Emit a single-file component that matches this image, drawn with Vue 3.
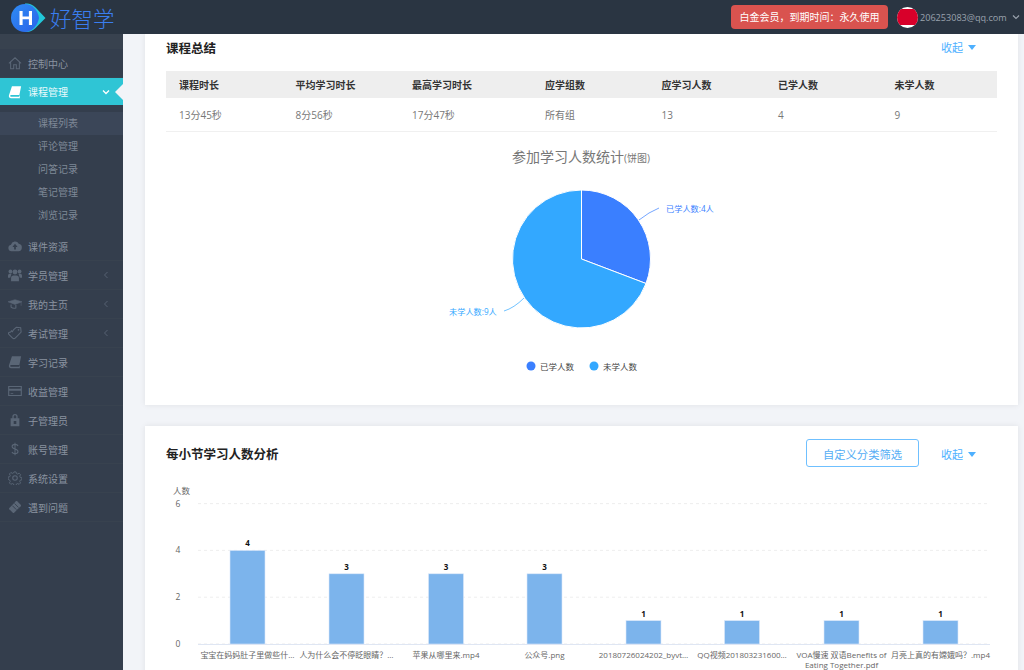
<template>
  <div class="page">
    <header class="topbar">
      <div class="logo">
        <svg class="logo-mark" width="36" height="30" viewBox="0 0 36 30">
          <defs>
            <linearGradient id="logoBlue" x1="0" y1="0" x2="1" y2="1">
              <stop offset="0" stop-color="#2f8df5" />
              <stop offset="1" stop-color="#2a62e8" />
            </linearGradient>
          </defs>
          <path d="M15 0.500C21 0.500 24 2.500 27 6L35.500 15 27 23.500C24 27 21 29 15 29Z" fill="#22c7d8" />
          <path d="M15 1C22 1 28 7 29 15 28 22 22 29 15 29A14 14 0 0 1 15 1Z" fill="url(#logoBlue)" />
          <path d="M9.500 8h3.100v5.500h6.300V8h3.100v14h-3.100v-5.700h-6.300V22H9.500z" fill="#fff" />
        </svg>
        <span class="logo-text">好智学</span>
      </div>
      <div class="user">
        <span class="badge">白金会员，到期时间：永久使用</span>
        <span class="avatar"><i></i></span>
        <span class="email">206253083@qq.com</span>
        <svg width="8" height="6" viewBox="0 0 8 6"><path d="M1 1.500l3 3 3-3" fill="none" stroke="#9aa3ae" stroke-width="1.200" /></svg>
      </div>
    </header>

    <div class="body">
      <aside class="sidebar">
        <div class="side-top"></div>
        <template v-for="item in menu" :key="item.label">
          <div class="menu-item" :class="{ active: item.active }">
            <svg class="menu-icon" width="14" height="14" viewBox="0 0 16 16" v-html="icons[item.icon]"></svg>
            <span class="menu-label">{{ item.label }}</span>
            <svg v-if="item.active" class="chev" width="8" height="8" viewBox="0 0 8 8"><path d="M1 2.500l3 3 3-3" fill="none" stroke="#fff" stroke-width="1.300" /></svg>
            <svg v-if="item.more" class="chev" width="8" height="8" viewBox="0 0 8 8"><path d="M5.500 1l-3 3 3 3" fill="none" stroke="#566172" stroke-width="1" /></svg>
            <span v-if="item.active" class="notch"></span>
          </div>
          <ul v-if="item.active" class="submenu">
            <li v-for="(sub, i) in submenu" :key="sub" :class="{ current: i === 0 }">{{ sub }}</li>
          </ul>
        </template>
      </aside>

      <main class="main">
        <section class="card first">
          <div class="card-head">
            <h2>课程总结</h2>
            <a class="toggle">收起<i class="caret"></i></a>
          </div>
          <div class="table">
            <div class="row head">
              <span v-for="h in tableHead" :key="h">{{ h }}</span>
            </div>
            <div class="row">
              <span v-for="c in tableRow" :key="c">{{ c }}</span>
            </div>
          </div>
          <svg class="pie" width="831" height="273" viewBox="166 132 831 273">
            <text x="512" y="162" class="pie-title">参加学习人数统计<tspan class="pie-sub">(饼图)</tspan></text>
            <path d="M581.500 259V190A69 69 0 0 1 646 283.500Z" fill="#3a7fff" stroke="#fff" />
            <path d="M581.500 259L646 283.500A69 69 0 1 1 581.500 190Z" fill="#33a8ff" stroke="#fff" />
            <path d="M639 220Q649 212 659 208" fill="none" stroke="#3a7fff" stroke-width=".7" />
            <path d="M524 298Q514 308 504 311" fill="none" stroke="#33a8ff" stroke-width=".7" />
            <text x="666" y="212" class="pie-label" fill="#3a7fff">已学人数:4人</text>
            <text x="449" y="315" class="pie-label" fill="#33a8ff">未学人数:9人</text>
            <circle cx="531" cy="366" r="4.500" fill="#3a7fff" />
            <text x="540" y="369.500" class="legend">已学人数</text>
            <circle cx="594" cy="366" r="4.500" fill="#33a8ff" />
            <text x="603" y="369.500" class="legend">未学人数</text>
          </svg>
        </section>

        <section class="card second">
          <div class="card-head tall">
            <h2>每小节学习人数分析</h2>
            <div class="head-actions">
              <button class="filter">自定义分类筛选</button>
              <a class="toggle low">收起<i class="caret"></i></a>
            </div>
          </div>
          <svg class="bars" width="831" height="190" viewBox="166 480 831 190">
            <text x="173" y="494" class="axis">人数</text>
            <g v-for="t in ticks" :key="t">
              <line x1="198" x2="990" :y1="yOf(t)" :y2="yOf(t)" class="grid" />
              <text x="178" :y="yOf(t) + 3" class="axis" text-anchor="middle">{{ t }}</text>
            </g>
            <line x1="198" x2="990" y1="644.500" y2="644.500" stroke="#dfe6f3" />
            <g v-for="b in bars" :key="b.x">
              <rect :x="b.x" :y="yOf(b.value)" width="35" :height="644 - yOf(b.value)" fill="#7cb4ec" stroke="#dbe8fa" stroke-width=".6" />
              <text :x="b.x + 17.500" :y="yOf(b.value) - 4" class="value" text-anchor="middle">{{ b.value }}</text>
              <text v-for="(line, i) in b.label" :key="line" :x="b.x + 17.500" :y="657.500 + i * 10" class="xlabel" text-anchor="middle">{{ line }}</text>
            </g>
          </svg>
        </section>
      </main>
    </div>
  </div>
</template>

<script setup>
const icons = {
  home: '<path d="M1 8.500L8 2l7 6.500M3 7v7.500h3.500V10h3v4.500H13V7" fill="none" stroke="currentColor" stroke-width="1.200"/>',
  book: '<path d="M4.500 1.500H15l-2 10H4c-1 0-1.500.5-1.500 1s.5 1 1.500 1h8.500l1-2v3.500H3.500C1.800 15 1 14 1 12.800c0-.5.100-1 .2-1.300z" fill="currentColor"/>',
  cloud: '<path d="M4 14a3.800 3.800 0 0 1-.6-7.500A4.800 4.800 0 0 1 12.300 5.500 4.300 4.300 0 0 1 12 14zM8 5.500L5 9h2v3h2V9h2z" fill="currentColor" fill-rule="evenodd"/>',
  users: '<circle cx="8" cy="4.500" r="2.800" fill="currentColor"/><circle cx="2.800" cy="4" r="2.200" fill="currentColor"/><circle cx="13.200" cy="4" r="2.200" fill="currentColor"/><path d="M3.500 15v-3.500a3 3 0 0 1 3-3h3a3 3 0 0 1 3 3V15zM0 11V8.500a2 2 0 0 1 2-2h2l-1.500 4.500zM16 11V8.500a2 2 0 0 0-2-2h-2l1.500 4.500z" fill="currentColor"/>',
  cap: '<path d="M0 5.500L8 3l8 2.500-8 3zM15 6v4" fill="currentColor" stroke="currentColor" stroke-width=".6"/><path d="M3.500 8.500v3c1.500 1.300 3.500 1.500 5.500 1V9" fill="none" stroke="currentColor" stroke-width="1.200"/>',
  tag: '<path d="M9.500 1.500l5 .5.500 5-6.500 6.500c-1 1-2.500 1-3.500 0l-4-4c-.5-.5-.5-1.500 0-2L3 7l1-1.500 1 1L6.500 4z" fill="none" stroke="currentColor" stroke-width="1.200"/><circle cx="12" cy="4.300" r="1" fill="currentColor"/>',
  card: '<path d="M.800 2.800h14.400v10.400H.800z" fill="none" stroke="currentColor" stroke-width="1.300"/><path d="M1 5.300h14v2.400H1zM3 10.500h3v1H3z" fill="currentColor"/>',
  lock: '<path d="M5 6V4a3 3 0 0 1 6 0v2h2v9H3V6zM6.500 6h3V4a1.500 1.500 0 0 0-3 0zM6.500 9v3.500h3V9z" fill="currentColor" fill-rule="evenodd"/>',
  dollar: '<path d="M11.500 4.500C11 3.200 9.700 2.700 8 2.700 6 2.700 4.700 3.700 4.700 5.200 4.700 7 6.300 7.500 8 8s3.400 1.100 3.400 2.900c0 1.500-1.400 2.500-3.400 2.500-1.700 0-3-.7-3.500-1.900M8 .800v14.400" fill="none" stroke="currentColor" stroke-width="1.200"/>',
  gear: '<circle cx="8" cy="8" r="2.600" fill="none" stroke="currentColor" stroke-width="1.200"/><path d="M6.800 1h2.400l.4 1.900 1.500.6 1.600-1 1.700 1.700-1 1.600.6 1.500 1.900.4v2.400l-1.900.4-.6 1.500 1 1.600-1.700 1.700-1.600-1-1.500.6-.4 1.900H6.800l-.4-1.900-1.500-.6-1.600 1-1.700-1.700 1-1.600-.6-1.500L.100 9.300V6.900l1.900-.4.600-1.500-1-1.600 1.700-1.700 1.600 1 1.500-.6z" fill="none" stroke="currentColor" stroke-width="1.100"/>',
  ticket: '<path d="M10.500 1.500l4 4c.5.500.5 1 0 1.500l-7.500 7.500c-.5.500-1 .5-1.500 0l-4-4c-.5-.5-.5-1 0-1.500L9 1.500c.5-.5 1-.5 1.500 0z" fill="currentColor"/><path d="M5 6.500l4.500 4.500M7.500 4l4.500 4.500" fill="none" stroke="#343e4d" stroke-width="1"/>'
}

const menu = [
  { label: '控制中心', icon: 'home' },
  { label: '课程管理', icon: 'book', active: true },
  { label: '课件资源', icon: 'cloud' },
  { label: '学员管理', icon: 'users', more: true },
  { label: '我的主页', icon: 'cap', more: true },
  { label: '考试管理', icon: 'tag', more: true },
  { label: '学习记录', icon: 'book' },
  { label: '收益管理', icon: 'card' },
  { label: '子管理员', icon: 'lock' },
  { label: '账号管理', icon: 'dollar' },
  { label: '系统设置', icon: 'gear' },
  { label: '遇到问题', icon: 'ticket' }
]

const submenu = ['课程列表', '评论管理', '问答记录', '笔记管理', '浏览记录']

const tableHead = ['课程时长', '平均学习时长', '最高学习时长', '应学组数', '应学习人数', '已学人数', '未学人数']
const tableRow = ['13分45秒', '8分56秒', '17分47秒', '所有组', '13', '4', '9']

const ticks = [0, 2, 4, 6]

const bars = [
  { x: 230, value: 4, label: ['宝宝在妈妈肚子里做些什…'] },
  { x: 329, value: 3, label: ['人为什么会不停眨眼睛？…'] },
  { x: 428.500, value: 3, label: ['苹果从哪里来.mp4'] },
  { x: 527, value: 3, label: ['公众号.png'] },
  { x: 626, value: 1, label: ['20180726024202_byvt…'] },
  { x: 724.500, value: 1, label: ['QQ视频201803231600…'] },
  { x: 824, value: 1, label: ['VOA慢速 双语Benefits of', 'Eating Together.pdf'] },
  { x: 923, value: 1, label: ['月亮上真的有嫦娥吗？.mp4'] }
]

function yOf(v) {
  return 644 - v * 23.400
}
</script>

<style>
html, body {
  margin: 0;
  background: #f2f4f8;
}
</style>

<style scoped>
.page {
  width: 1024px;
  height: 670px;
  overflow: hidden;
  display: flex;
  flex-direction: column;
  font-family: "Open Sans", "Noto Sans CJK SC", sans-serif;
  font-size: 10px;
}

.topbar {
  height: 34px;
  flex: none;
  background: #2a3542;
  display: flex;
  align-items: center;
  justify-content: space-between;
  padding: 0 4px 0 10px;
}

.logo {
  display: flex;
  align-items: center;
  gap: 3px;
}

.logo-mark {
  margin-top: 2px;
}

.logo-text {
  color: #3a7ef0;
  font-size: 21.500px;
  font-weight: 300;
  margin-left: 1px;
}

.user {
  display: flex;
  align-items: center;
}

.badge {
  width: 157px;
  height: 24px;
  line-height: 24px;
  text-align: center;
  color: #fff;
  background: #d9534f;
  border-radius: 4px;
  font-size: 10px;
  margin-right: 9px;
}

.avatar {
  width: 21px;
  height: 21px;
  border-radius: 50%;
  background: #fff;
  display: flex;
  align-items: center;
  justify-content: center;
  overflow: hidden;
  margin-right: 2px;
}

.avatar i {
  width: 21px;
  height: 16px;
  background: #d8002a;
}

.email {
  color: #9aa3ae;
  font-size: 9.100px;
  width: 92px;
  white-space: nowrap;
}

.body {
  flex: 1;
  display: flex;
  min-height: 0;
}

.sidebar {
  width: 123px;
  flex: none;
  background: #343e4d;
  color: #8a93a0;
}

.side-top {
  height: 15px;
  background: #38424f;
}

.menu-item {
  position: relative;
  height: 29px;
  display: flex;
  align-items: center;
  padding-left: 8px;
  color: #5a6676;
  border-bottom: 1px solid #38424f;
  box-sizing: border-box;
}

.menu-item.active {
  height: 27px;
  background: #2fc5d5;
  color: #fff;
  border-bottom: 0;
}

.menu-icon {
  width: 14px;
  height: 14px;
  flex: none;
}

.menu-label {
  margin-left: 6px;
  color: #8a93a0;
}

.active .menu-label {
  color: #eafafc;
}

.chev {
  position: absolute;
  left: 102px;
  top: 50%;
  margin-top: -4px;
}

.notch {
  position: absolute;
  right: 0;
  top: 6px;
  border: 8px solid transparent;
  border-left: 0;
  border-right-color: #f2f4f8;
}

.submenu {
  list-style: none;
  margin: 0;
  padding: 7px 0 5px;
}

.submenu li {
  height: 23px;
  line-height: 23px;
  padding-left: 38px;
  color: #7f8997;
}

.submenu li.current {
  background: #3b4658;
}

.main {
  flex: 1;
  padding: 0 6px 0 22px;
  background: #f2f4f8;
  overflow: hidden;
}

.card {
  background: #fff;
  padding: 0 21px;
  box-shadow: 0 0 6px rgba(0, 0, 0, 0.08);
}

.first {
  height: 371px;
  box-sizing: border-box;
  margin-bottom: 21px;
}

.second {
  height: 300px;
}

.card-head {
  height: 26px;
  display: flex;
  align-items: center;
  justify-content: space-between;
  margin-bottom: 11px;
}

.card-head.tall {
  height: 54px;
  margin-bottom: 0;
}

.card-head h2 {
  margin: 0;
  font-size: 12.500px;
  font-weight: 700;
  color: #222;
}

.head-actions {
  display: flex;
  align-items: center;
}

.toggle {
  width: 58px;
  padding-left: 2px;
  box-sizing: border-box;
  color: #4db0ff;
  font-size: 11px;
  display: flex;
  align-items: center;
}

.toggle.low {
  margin-top: 2px;
}

.caret {
  margin-left: 5px;
  margin-top: 1px;
  border: 4px solid transparent;
  border-top: 5px solid #4db0ff;
  border-bottom: 0;
}

.filter {
  width: 113px;
  height: 28px;
  margin-right: 20px;
  padding: 2px 0 0;
  background: #fff;
  border: 1px solid #6fc0ff;
  border-radius: 3px;
  color: #55aef5;
  font-family: inherit;
  font-size: 11.300px;
}

.table {
  font-size: 10px;
}

.row {
  display: grid;
  grid-template-columns: 116.500px 116.500px 133px 116.500px 116.500px 116.500px 1fr;
  height: 33px;
  align-items: center;
  padding-left: 13px;
  color: #777;
  border-bottom: 1px solid #f0f0f0;
}

.row.head {
  height: 27px;
  background: #eee;
  color: #333;
  font-weight: 700;
  border-bottom: 0;
}

.pie, .bars {
  display: block;
}

.pie-title {
  font-size: 14px;
  fill: #777;
}

.pie-sub {
  font-size: 10px;
}

.pie-label {
  font-size: 8.200px;
}

.legend {
  font-size: 8.500px;
  fill: #444;
}

.axis {
  font-size: 8.500px;
  fill: #666;
}

.grid {
  stroke: #e6e6e6;
  stroke-dasharray: 3 3;
  stroke-width: 0.700;
}

.value {
  font-size: 8px;
  font-weight: 700;
  fill: #111;
}

.xlabel {
  font-size: 8px;
  fill: #666;
}
</style>
